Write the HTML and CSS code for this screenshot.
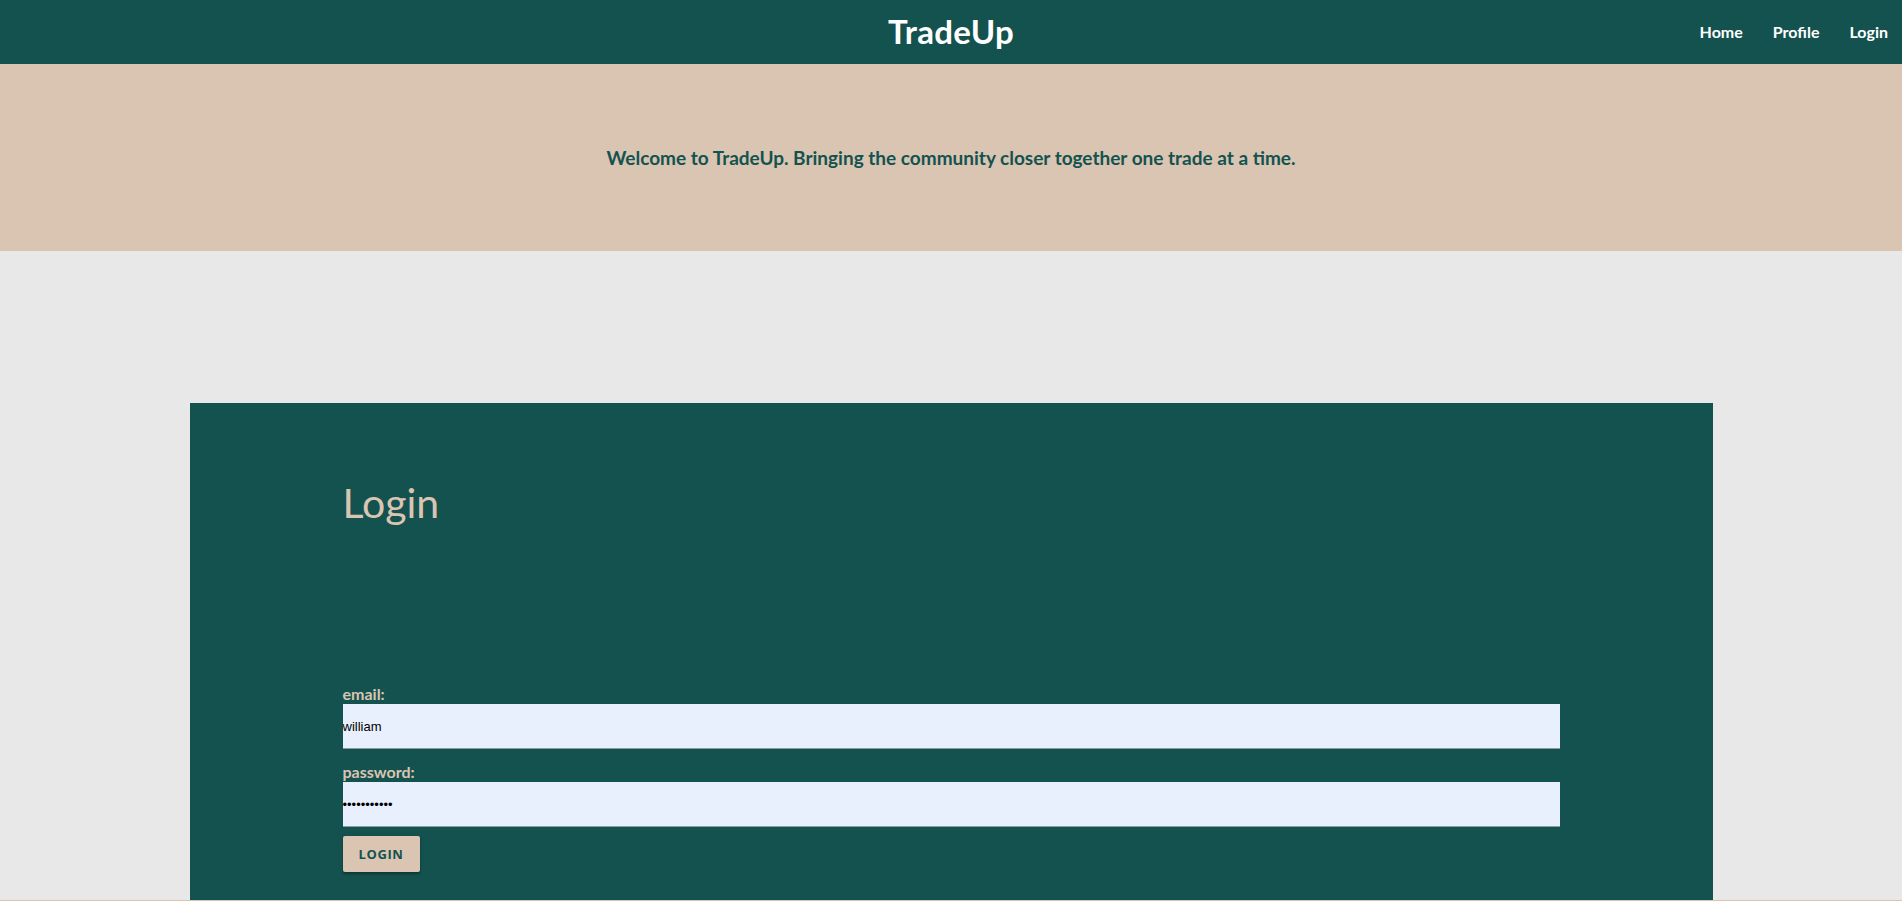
FILE: index.html
```html
<!DOCTYPE html>
<html lang="en">
<head>
<meta charset="utf-8">
<title>TradeUp</title>
<link rel="stylesheet" href="styles.css">
</head>
<body>
<header class="topbar">
  <div class="spacer"></div>
  <a class="brand" href="#">TradeUp</a>
  <nav class="nav">
    <a href="#">Home</a>
    <a href="#">Profile</a>
    <a href="#">Login</a>
  </nav>
</header>
<section class="banner">
  <p class="tagline">Welcome to TradeUp. Bringing the community closer together one trade at a time.</p>
</section>
<main class="main">
  <div class="card">
    <h1 class="title">Login</h1>
    <form class="form">
      <label class="label" for="email">email:</label>
      <input class="field" id="email" type="text" value="william">
      <label class="label" for="pw">password:</label>
      <input class="field" id="pw" type="password" value="williamwill">
      <button class="btn" type="button">LOGIN</button>
    </form>
  </div>
</main>
<footer class="footer"></footer>
</body>
</html>
```

FILE: styles.css
```css
* { box-sizing: border-box; }
body {
  margin: 0;
  background: #e8e8e8;
  font-family: "Lato", "Open Sans", sans-serif;
}
.topbar {
  height: 64px;
  background: #145250;
  display: grid;
  grid-template-columns: 1fr auto 1fr;
  align-items: center;
}
.brand {
  color: #ffffff;
  text-decoration: none;
  font-weight: 700;
  font-size: 33px;
  letter-spacing: 0.3px;
  padding-bottom: 2px;
}
.nav {
  display: flex;
  justify-content: flex-end;
  gap: 30px;
  padding-right: 14px;
  padding-bottom: 2px;
}
.nav a {
  color: #ffffff;
  text-decoration: none;
  font-weight: 700;
  font-size: 16px;
}
.banner {
  height: 187px;
  background: #dac5b2;
  display: flex;
  align-items: center;
  justify-content: center;
}
.tagline {
  margin: 0;
  color: #145250;
  font-weight: 700;
  font-size: 19px;
}
.main {
  padding-top: 152px;
}
.card {
  width: 1523px;
  margin: 0 auto;
  background: #145250;
  padding: 72px 153px 28px;
}
.title {
  margin: 0;
  color: #dac5b2;
  font-weight: 400;
  font-size: 41px;
  line-height: 56px;
  height: 208px;
}
.form {
  display: flex;
  flex-direction: column;
  align-items: flex-start;
}
.label {
  color: #dac5b2;
  font-weight: 700;
  font-size: 16px;
  line-height: 21px;
}
.field {
  width: 100%;
  height: 45px;
  margin: 0 0 12px;
  padding: 0;
  border: none;
  border-bottom: 1px solid #8e9b9b;
  background: #e8f0fe;
  font-family: "Liberation Sans", Arial, sans-serif;
  font-size: 13px;
  color: #000000;
  outline: none;
}
.btn {
  margin-top: -3px;
  width: 77px;
  height: 36px;
  border: none;
  border-radius: 2px;
  background: #dac5b2;
  color: #145250;
  font-family: "Open Sans", "Lato", sans-serif;
  font-weight: 700;
  font-size: 13px;
  letter-spacing: 0.6px;
  box-shadow: 0 2px 2px rgba(0,0,0,0.25), 0 1px 5px rgba(0,0,0,0.15);
  cursor: pointer;
}
.footer {
  height: 40px;
  background: #dac5b2;
}
```
